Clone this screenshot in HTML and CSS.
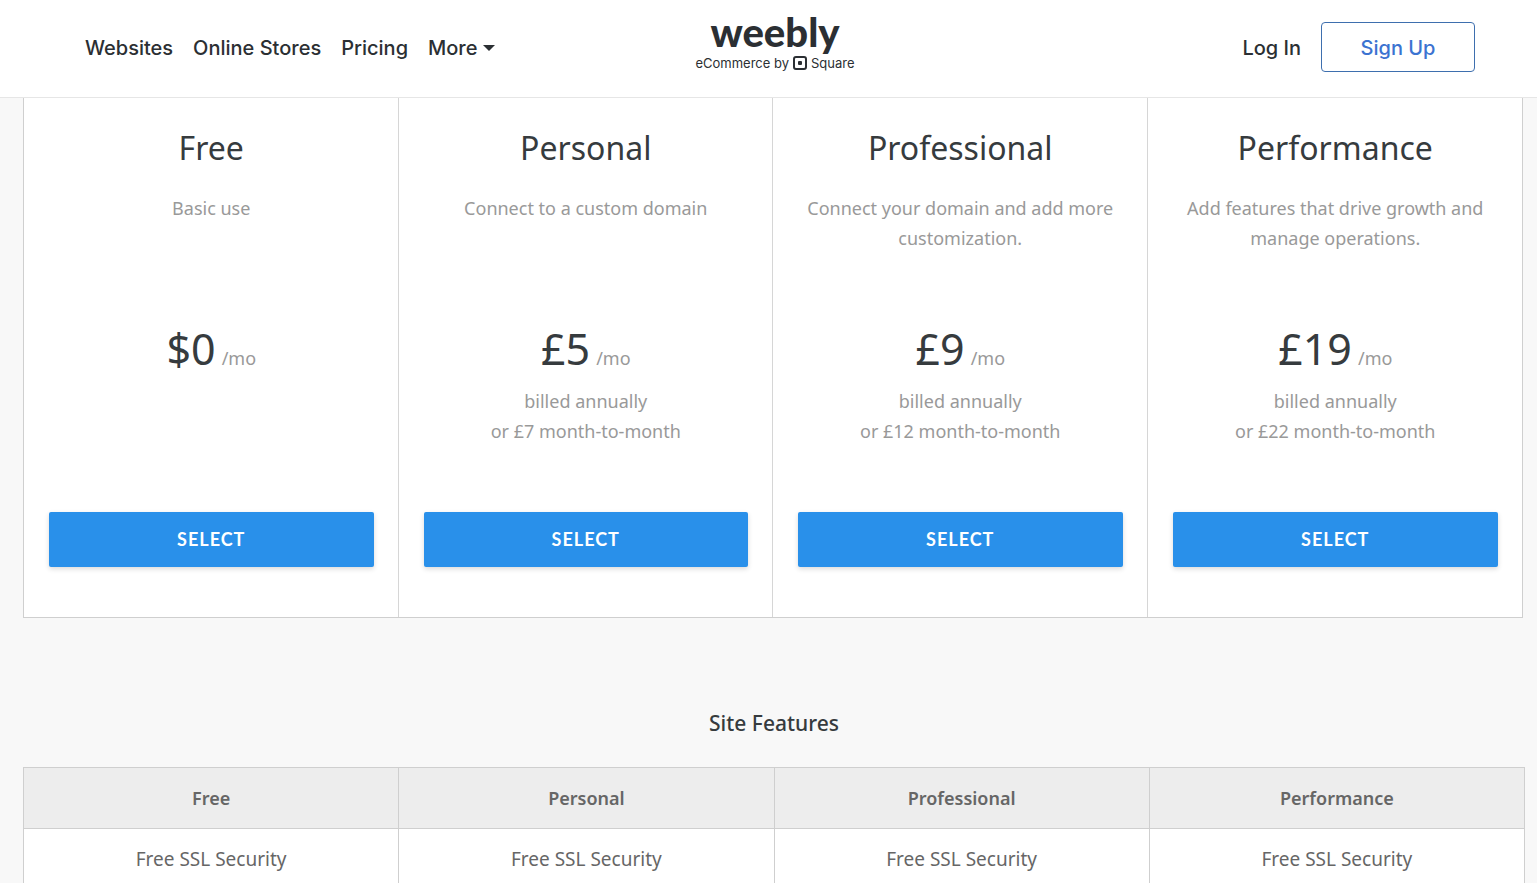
FILE: index.html
```html
<!DOCTYPE html>
<html lang="en">
<head>
    <meta charset="UTF-8">
    <meta name="viewport" content="width=device-width, initial-scale=1.0">
    <title>Weebly Pricing</title>
    <link rel="stylesheet" href="styles.css">
</head>
<body>
    <header class="site-header">
        <nav class="nav">
            <a href="#">Websites</a>
            <a href="#">Online Stores</a>
            <a href="#">Pricing</a>
            <a href="#" class="more">More <span class="caret"></span></a>
        </nav>
        <a href="#" class="logo">
            <span class="wordmark">weebly</span>
            <span class="byline">eCommerce by
                <svg width="14" height="14" viewBox="0 0 14 14" aria-hidden="true">
                    <rect x="1" y="1" width="12" height="12" rx="2" fill="none" stroke="#2b2f33" stroke-width="2"/>
                    <rect x="5" y="5" width="4" height="4" rx="1" fill="#2b2f33"/>
                </svg>
                Square</span>
        </a>
        <div class="account">
            <a href="#">Log In</a>
            <a href="#" class="signup">Sign Up</a>
        </div>
    </header>

    <main class="content">
        <section class="plans">
            <div class="plan">
                <h2>Free</h2>
                <p class="description">Basic use</p>
                <p class="price">$0 <span>/mo</span></p>
                <p class="billing"></p>
                <button type="button" class="btn">SELECT</button>
            </div>
            <div class="plan">
                <h2>Personal</h2>
                <p class="description">Connect to a custom domain</p>
                <p class="price">£5 <span>/mo</span></p>
                <p class="billing">billed annually<br>or £7 month-to-month</p>
                <button type="button" class="btn">SELECT</button>
            </div>
            <div class="plan">
                <h2>Professional</h2>
                <p class="description">Connect your domain and add more customization.</p>
                <p class="price">£9 <span>/mo</span></p>
                <p class="billing">billed annually<br>or £12 month-to-month</p>
                <button type="button" class="btn">SELECT</button>
            </div>
            <div class="plan">
                <h2>Performance</h2>
                <p class="description">Add features that drive growth and manage operations.</p>
                <p class="price">£19 <span>/mo</span></p>
                <p class="billing">billed annually<br>or £22 month-to-month</p>
                <button type="button" class="btn">SELECT</button>
            </div>
        </section>

        <h3 class="features-title">Site Features</h3>
        <table class="features">
            <thead>
                <tr>
                    <th>Free</th>
                    <th>Personal</th>
                    <th>Professional</th>
                    <th>Performance</th>
                </tr>
            </thead>
            <tbody>
                <tr>
                    <td>Free SSL Security</td>
                    <td>Free SSL Security</td>
                    <td>Free SSL Security</td>
                    <td>Free SSL Security</td>
                </tr>
            </tbody>
        </table>
    </main>
</body>
</html>
```

FILE: styles.css
```css
* {
    box-sizing: border-box;
}
body {
    margin: 0;
    font-family: 'Noto Sans', sans-serif;
    font-size: 18px;
    line-height: 30px;
    color: #363b3e;
    background: #f8f8f8;
}
a {
    color: inherit;
    text-decoration: none;
}

/* Header */
.site-header {
    display: grid;
    grid-template-columns: 1fr auto 1fr;
    align-items: center;
    height: 98px;
    padding: 0 62px 4px 75px;
    background: #fff;
    border-bottom: 1px solid #e6e6e6;
    font-family: Inter, sans-serif;
    font-size: 20px;
    font-weight: 500;
    color: #2b2f33;
}
.nav {
    display: flex;
}
.nav a {
    padding: 2px 10px 0;
}
.more {
    display: flex;
    align-items: center;
    gap: 6px;
}
.caret {
    border: 6px solid transparent;
    border-top-color: #2b2f33;
    border-bottom: 0;
}
.logo {
    display: flex;
    flex-direction: column;
    align-items: center;
    padding-bottom: 14px;
}
.wordmark {
    font-family: Lato, sans-serif;
    font-size: 40px;
    font-weight: 900;
    line-height: 46px;
}
.byline {
    display: flex;
    align-items: center;
    gap: 4px;
    font-size: 13px;
    font-weight: 400;
    line-height: 16px;
}
.account {
    display: flex;
    align-items: center;
    justify-content: flex-end;
    gap: 20px;
}
.account a {
    padding-top: 2px;
}
.signup {
    width: 154px;
    border: 1px solid #3e6fae;
    border-radius: 4px;
    line-height: 46px;
    text-align: center;
    color: #3b73d1;
}

/* Plans */
.content {
    padding: 0 12px 0 23px;
}
.plans {
    display: grid;
    grid-template-columns: repeat(4, 1fr);
    margin-right: 2px;
    background: #fff;
    border: 1px solid #cfcfcf;
    border-top: 0;
    text-align: center;
}
.plan {
    padding: 30px 24px 50px 25px;
    border-right: 1px solid #d6d6d6;
}
.plan:last-child {
    border-right: 0;
}
.plan h2 {
    margin: 0 0 25px;
    font-size: 32px;
    font-weight: 400;
    line-height: 40px;
}
.plan p {
    margin: 0;
    color: #999;
}
.plan .description {
    height: 60px;
    margin-bottom: 70px;
}
.plan .price {
    display: flex;
    align-items: baseline;
    justify-content: center;
    gap: 6px;
    margin-bottom: 11px;
    font-size: 43px;
    line-height: 52px;
    color: #363b3e;
}
.price span {
    font-size: 18px;
    line-height: 30px;
    color: #999;
}
.plan .billing {
    height: 60px;
    margin-bottom: 66px;
}
.btn {
    display: block;
    width: 100%;
    height: 55px;
    padding: 0 0 2px;
    border: 0;
    border-radius: 2px;
    background: #2990ea;
    box-shadow: 0 2px 5px rgba(0, 0, 0, 0.15);
    font-family: Lato, sans-serif;
    font-size: 18px;
    font-weight: 700;
    letter-spacing: 1px;
    color: #fff;
}

/* Feature table */
.features-title {
    margin: 90px 0 29px;
    font-size: 21px;
    font-weight: 500;
    text-align: center;
}
.features {
    width: 100%;
    table-layout: fixed;
    border-collapse: collapse;
    background: #fff;
    text-align: center;
    color: #666;
}
.features th,
.features td {
    padding: 15px;
    border: 1px solid #cfcfcf;
}
.features th {
    background: #ededed;
    font-weight: 600;
}
.features td {
    font-size: 19px;
}
```
